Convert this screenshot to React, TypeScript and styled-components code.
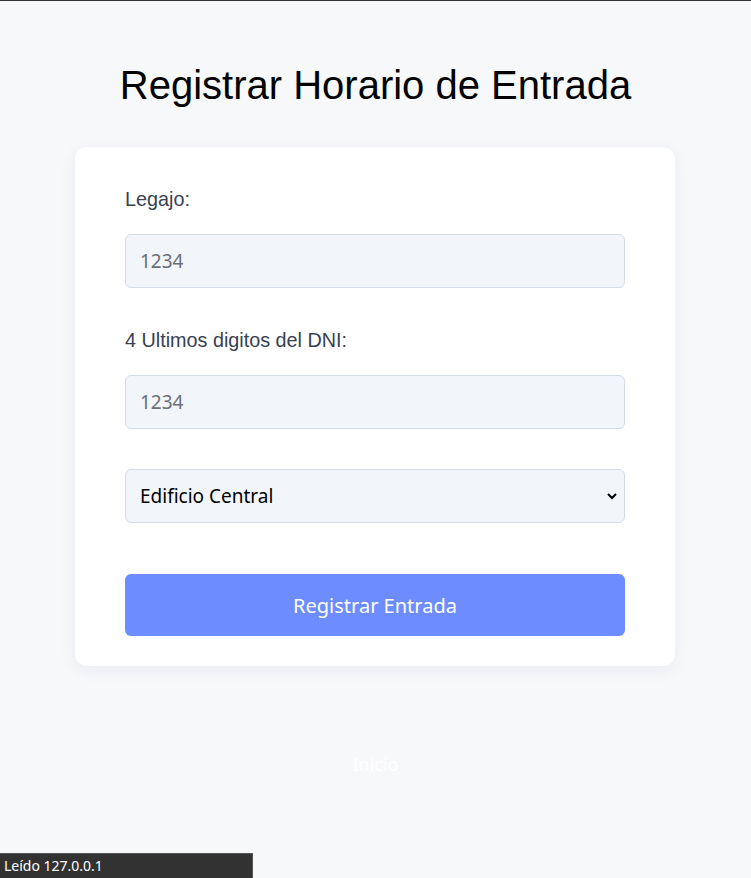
import React from "react";
import styled, { createGlobalStyle } from "styled-components";

const Global = createGlobalStyle`
  html, body { margin: 0; padding: 0; }
  body {
    background: #f7f8fa;
    font-family: "Liberation Sans", Arial, sans-serif;
  }
  * { box-sizing: border-box; }
`;

const Page = styled.div`
  min-height: 878px;
  border-top: 1px solid #35373b;
  display: flex;
  flex-direction: column;
  align-items: center;
  position: relative;
`;

const Title = styled.h1`
  margin: 61px 0 39px;
  font-family: "Liberation Sans", Arial, sans-serif;
  font-weight: 400;
  font-size: 40px;
  line-height: 46px;
  color: #000;
`;

const Card = styled.form`
  width: 600px;
  margin-right: 1px;
  background: #fff;
  border-radius: 12px;
  box-shadow: 0 4px 18px rgba(20, 30, 60, 0.06);
  padding: 41px 50px 30px;
  display: flex;
  flex-direction: column;
`;

const Label = styled.label<{ $top?: number }>`
  margin-top: ${(p) => p.$top ?? 0}px;
  font-size: 19.8px;
  line-height: 22px;
  color: #374151;
  margin-bottom: 24px;
`;

const Field = styled.input`
  height: 54px;
  width: 100%;
  background: #f2f5f9;
  border: 1px solid #d3dce7;
  border-radius: 6px;
  padding: 0 14px;
  font-family: "Noto Sans", "DejaVu Sans", sans-serif;
  font-size: 19px;
  color: #111;
  outline: none;
  &::placeholder { color: #6b6f76; }
`;

const SelectWrap = styled.div`
  margin-top: 40px;
  position: relative;
`;

const Select = styled.select`
  appearance: none;
  height: 54px;
  width: 100%;
  background: #f2f5f9;
  border: 1px solid #d3dce7;
  border-radius: 6px;
  padding: 0 14px;
  font-family: "Noto Sans", "DejaVu Sans", sans-serif;
  font-size: 19px;
  color: #000;
  outline: none;
`;

const Chevron = styled.svg`
  position: absolute;
  right: 6px;
  top: 22px;
  pointer-events: none;
`;

const Button = styled.button`
  margin-top: 51px;
  height: 62px;
  border: none;
  border-radius: 6px;
  background: #6d8cff;
  color: #fff;
  font-family: "Noto Sans", "DejaVu Sans", sans-serif;
  font-size: 20px;
`;

const HomeLink = styled.a`
  margin-top: 86px;
  font-family: "Noto Sans", "DejaVu Sans", sans-serif;
  font-size: 18px;
  color: #fff;
  text-decoration: none;
`;

const StatusBar = styled.div`
  position: fixed;
  left: 0;
  bottom: 0;
  width: 253px;
  height: 25px;
  background: #323232;
  border-top: 1px solid #555;
  border-right: 1px solid #555;
  color: #fff;
  font-family: "Noto Sans", "DejaVu Sans", sans-serif;
  font-size: 14px;
  line-height: 24px;
  padding-left: 4px;
`;

export default function App() {
  return (
    <>
      <Global />
      <Page>
        <Title>Registrar Horario de Entrada</Title>
        <Card onSubmit={(e) => e.preventDefault()}>
          <Label htmlFor="legajo">Legajo:</Label>
          <Field id="legajo" placeholder="1234" />
          <Label htmlFor="dni" $top={41}>
            4 Ultimos digitos del DNI:
          </Label>
          <Field id="dni" placeholder="1234" />
          <SelectWrap>
            <Select defaultValue="central">
              <option value="central">Edificio Central</option>
            </Select>
            <Chevron width="14" height="10" viewBox="0 0 14 10">
              <path d="M3 3 L7 7 L11 3" fill="none" stroke="#000" strokeWidth="2" />
            </Chevron>
          </SelectWrap>
          <Button type="submit">Registrar Entrada</Button>
        </Card>
        <HomeLink href="#">Inicio</HomeLink>
        <StatusBar>Leído 127.0.0.1</StatusBar>
      </Page>
    </>
  );
}
